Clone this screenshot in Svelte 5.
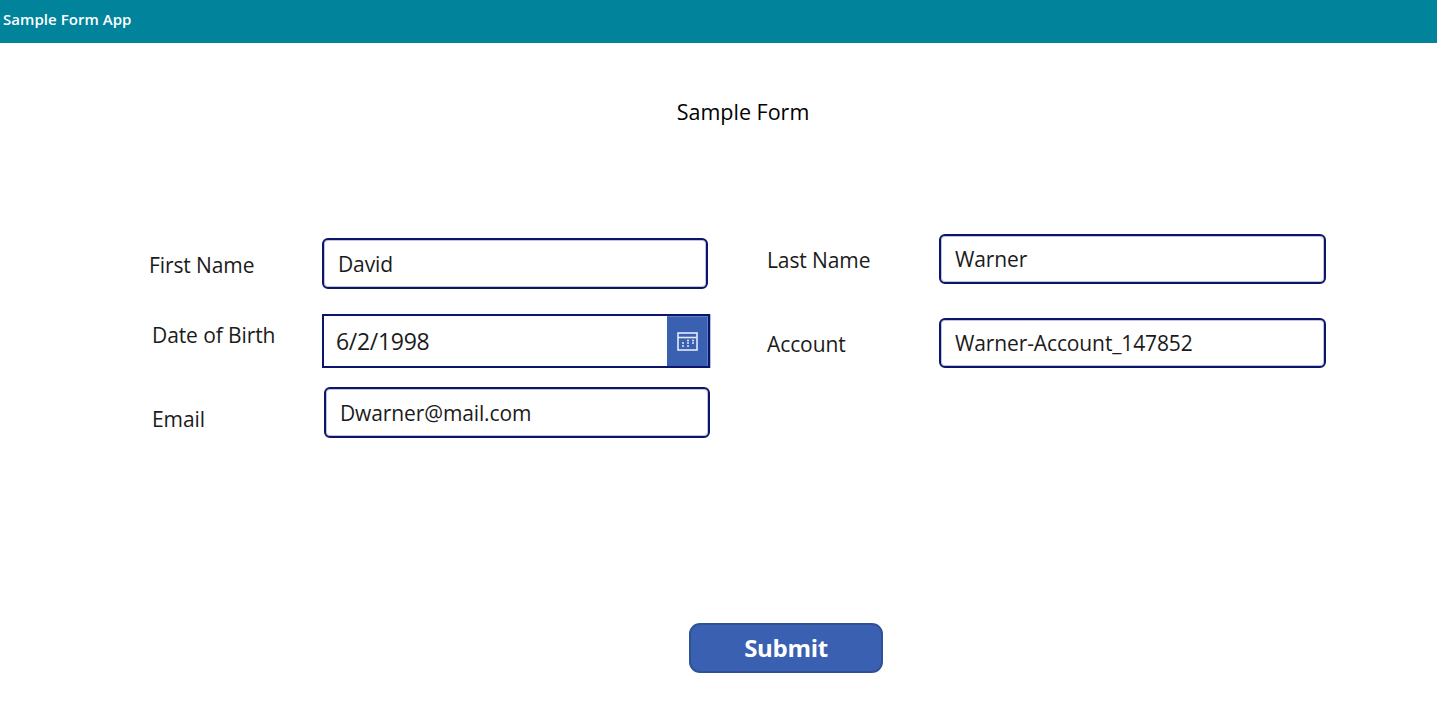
<script>
    let firstName = $state('David');
    let lastName = $state('Warner');
    let dob = $state('6/2/1998');
    let account = $state('Warner-Account_147852');
    let email = $state('Dwarner@mail.com');
</script>

<header class="topbar">Sample Form App</header>

<main>
    <h1>Sample Form</h1>

    <form class="form" onsubmit={(e) => e.preventDefault()}>
        <div class="col left">
            <div class="row first">
                <label for="first">First Name</label>
                <input id="first" bind:value={firstName} />
            </div>
            <div class="row dob">
                <label for="dob">Date of Birth</label>
                <div class="date">
                    <input id="dob" bind:value={dob} />
                    <span class="cal">
                        <svg width="21" height="19" viewBox="0 0 21 19" fill="none">
                            <rect x="1" y="1" width="19" height="17" stroke="#e4eaf6" stroke-width="1.6" />
                            <path d="M1 5.5h19" stroke="#e4eaf6" stroke-width="1.6" />
                            <path d="M10 8.5h2M15 8.5h2M5 11h2M10 11h2M15 11h2M5 14h2M10 14h2" stroke="#e4eaf6" stroke-width="1.6" />
                        </svg>
                    </span>
                </div>
            </div>
            <div class="row email">
                <label for="email">Email</label>
                <input id="email" bind:value={email} />
            </div>
        </div>

        <div class="col right">
            <div class="row last">
                <label for="last">Last Name</label>
                <input id="last" bind:value={lastName} />
            </div>
            <div class="row account">
                <label for="account">Account</label>
                <input id="account" bind:value={account} />
            </div>
        </div>
    </form>

    <div class="actions">
        <button type="submit">Submit</button>
    </div>
</main>

<style>
    :global(body) {
        background: #fff;
        font-family: "Open Sans", "Noto Sans", sans-serif;
        color: #1b1b1b;
    }

    .topbar {
        height: 43px;
        line-height: 39px;
        padding-left: 3px;
        background: #00839b;
        color: #fff;
        font-size: 15px;
        font-weight: 600;
        letter-spacing: 0.05px;
    }

    h1 {
        margin: 0;
        padding-top: 55px;
        padding-left: 49px;
        height: 28px;
        line-height: 27px;
        text-align: center;
        font-size: 21.5px;
        font-weight: 500;
        color: #000;
    }

    .form {
        display: flex;
        margin-top: 108px;
        padding-left: 149px;
    }

    .col {
        display: flex;
        flex-direction: column;
    }

    .left {
        width: 618px;
    }

    .row {
        display: flex;
        align-items: center;
    }

    label {
        font-size: 21px;
        letter-spacing: -0.1px;
        line-height: 28px;
    }

    input {
        box-sizing: border-box;
        height: 50px;
        padding: 0 14px;
        border: 2px solid #0b1569;
        border-radius: 6px;
        box-shadow: inset 0 0 0 1px rgba(11, 21, 105, 0.25);
        background: #fff;
        font-family: inherit;
        font-size: 21px;
        letter-spacing: -0.12px;
        color: #1b1b1b;
        outline: none;
    }

    .first {
        margin-top: 4px;
    }
    .first label {
        width: 173px;
        margin-top: 2px;
    }
    .first input {
        width: 386px;
        height: 51px;
    }

    .dob {
        margin-top: 25px;
    }
    .dob label {
        width: 170px;
        margin-left: 3px;
        margin-top: -12px;
    }
    .date {
        display: flex;
        width: 388px;
        height: 54px;
        box-sizing: border-box;
        border: 2px solid #0b1569;
        box-shadow: 1px 0 0 #b4c0e4;
    }
    .date input {
        flex: 1;
        min-width: 0;
        height: 50px;
        padding: 0 12px;
        border: 0;
        border-radius: 0;
        box-shadow: none;
        font-size: 23px;
        letter-spacing: -0.3px;
    }
    .cal {
        width: 41px;
        display: flex;
        align-items: center;
        justify-content: center;
        background: #3a60b2;
        box-shadow: inset -1px 1px 0 #5f7fc2;
    }

    .email {
        margin-top: 19px;
    }
    .email label {
        width: 172px;
        margin-left: 3px;
        margin-top: 12px;
    }
    .email input {
        width: 386px;
        height: 51px;
    }

    .last label,
    .account label {
        width: 172px;
        margin-top: 2px;
    }
    .last input,
    .account input {
        width: 387px;
    }
    .account {
        margin-top: 34px;
    }

    .actions {
        display: flex;
        margin-top: 185px;
        padding-left: 689px;
    }

    button {
        width: 194px;
        height: 50px;
        padding: 0 0 2px;
        border: 2px solid #2f5197;
        border-radius: 11px;
        background: #3a60b2;
        color: #fff;
        font-family: inherit;
        font-size: 24px;
        font-weight: 700;
        letter-spacing: -0.3px;
    }
</style>
